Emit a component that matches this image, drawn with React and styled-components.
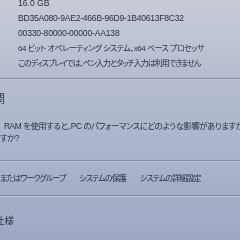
import React from "react";
import styled, { createGlobalStyle } from "styled-components";

const Global = createGlobalStyle`
  html, body { margin: 0; padding: 0; }
  body {
    width: 240px;
    height: 240px;
    overflow: hidden;
    background: #a9b2c9;
  }
`;

const Page = styled.div`
  width: 240px;
  height: 240px;
  overflow: hidden;
  display: flex;
  flex-direction: column;
  background: linear-gradient(
    180deg,
    #c7cbd7 0px,
    #bec4d3 40px,
    #b5bcd0 76px,
    #afb8ce 120px,
    #a9b3cb 160px,
    #a4aec8 200px,
    #9fa9c5 240px
  );
  color: #2b3143;
  font-family: "Liberation Sans", "Noto Sans CJK JP", sans-serif;
  font-feature-settings: "palt";
  filter: blur(0.25px);
`;

const Section = styled.section`
  display: flex;
  flex-direction: column;
  flex: none;
  padding: ${(p) => p.$pad || "0"};
  margin-top: ${(p) => p.$mt || "0"};
  border-bottom: 1px solid #848ea8;
  box-shadow: 0 1px 0 #bdc4d6;
`;

const SpecValue = styled.div`
  font-size: ${(p) => p.$size || "8.6px"};
  line-height: 15px;
  height: 15px;
  white-space: nowrap;
  letter-spacing: ${(p) => p.$ls || "0"};
`;

const Heading = styled.div`
  font-size: ${(p) => p.$size || "11px"};
  line-height: 14px;
  white-space: nowrap;
  margin-left: ${(p) => p.$shift || "0"};
`;

const HelpLink = styled.div`
  font-size: 8.4px;
  line-height: 12px;
  white-space: nowrap;
  letter-spacing: -0.45px;
  margin-left: ${(p) => p.$indent || "0"};
  margin-top: ${(p) => p.$mt || "0"};
`;

const LinkRow = styled.div`
  display: flex;
  align-items: center;
  gap: 14px;
  height: 34px;
  font-size: 8px;
  letter-spacing: -0.9px;
  white-space: nowrap;
`;

const RowLink = styled.span`
  flex: none;
`;

export default function App() {
  return (
    <>
      <Global />
      <Page>
        <Section $pad="0 0 7px 18px" $mt="-4.5px">
          <SpecValue>16.0 GB</SpecValue>
          <SpecValue $ls="-0.25px">BD35A080-9AE2-466B-96D9-1B40613F8C32</SpecValue>
          <SpecValue $ls="-0.2px">00330-80000-00000-AA138</SpecValue>
          <SpecValue $size="8px" $ls="-0.5px">
            64 ビット オペレーティング システム、x64 ベース プロセッサ
          </SpecValue>
          <SpecValue $size="8px" $ls="-1px">
            このディスプレイでは、ペン入力とタッチ入力は利用できません
          </SpecValue>
        </Section>
        <Section $pad="13px 0 16px 0">
          <Heading $shift="-6px">問</Heading>
          <HelpLink $indent="4px" $mt="14px">
            RAM を使用すると、PC のパフォーマンスにどのような影響がありますか?
          </HelpLink>
          <HelpLink>すか?</HelpLink>
        </Section>
        <Section>
          <LinkRow>
            <RowLink>またはワークグループ</RowLink>
            <RowLink>システムの保護</RowLink>
            <RowLink>システムの詳細設定</RowLink>
          </LinkRow>
        </Section>
        <Section $pad="18px 0 13px 0">
          <Heading $size="9.5px" $shift="-5px">仕様</Heading>
        </Section>
      </Page>
    </>
  );
}
